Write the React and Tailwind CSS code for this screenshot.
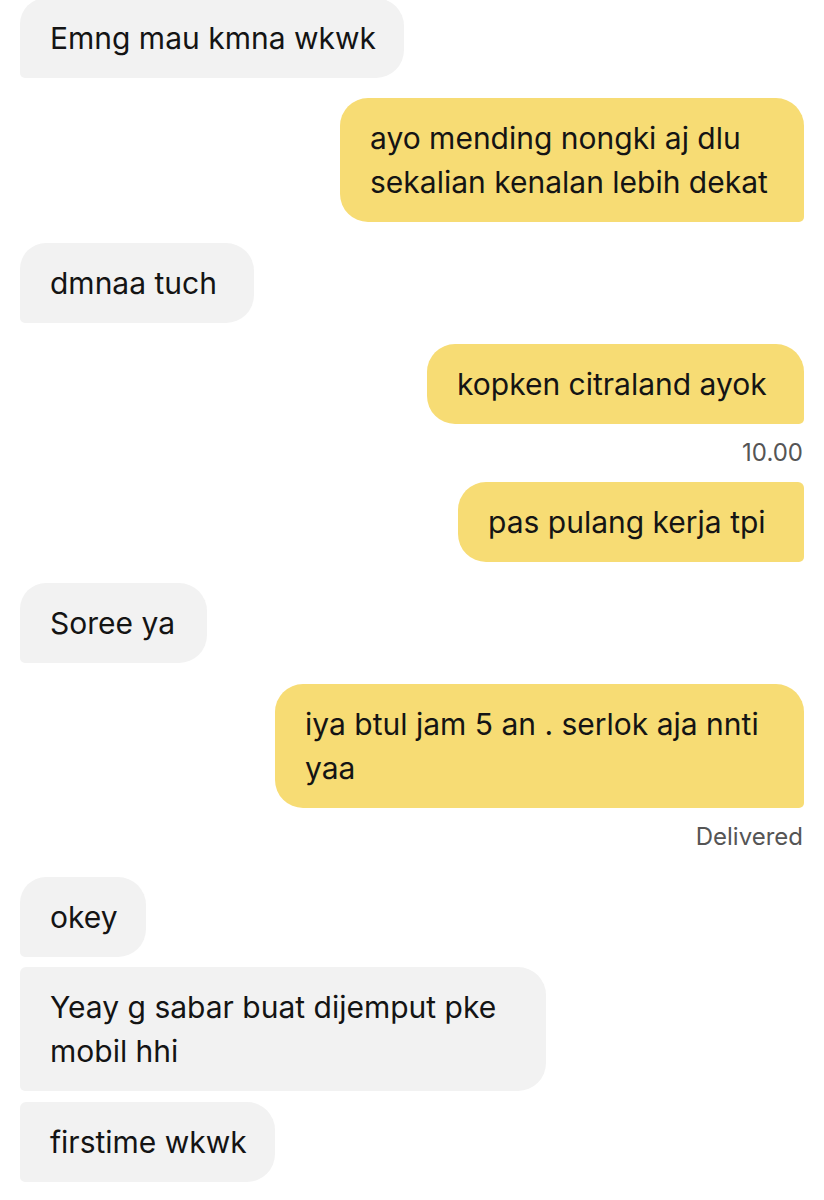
const FONT = { fontFamily: 'Inter, "Noto Sans", sans-serif' }

const messages = [
  { from: 'them', w: 'w-[384px]', tl: 'rounded-tl-[26px]', text: ['Emng mau kmna wkwk'] },
  { from: 'me', w: 'w-[464px]', tr: 'rounded-tr-[28px]', text: ['ayo mending nongki aj dlu', 'sekalian kenalan lebih dekat'], gap: 'mt-[20px]' },
  { from: 'them', w: 'w-[234px]', tl: 'rounded-tl-[26px]', text: ['dmnaa tuch'] },
  { from: 'me', w: 'w-[377px]', tr: 'rounded-tr-[28px]', text: ['kopken citraland ayok'] },
  { meta: '10.00' },
  { from: 'me', w: 'w-[346px]', tr: 'rounded-tr-[6px]', text: ['pas pulang kerja tpi'], gap: 'mt-0' },
  { from: 'them', w: 'w-[187px]', tl: 'rounded-tl-[26px]', text: ['Soree ya'] },
  { from: 'me', w: 'w-[529px]', tr: 'rounded-tr-[28px]', text: ['iya btul jam 5 an . serlok aja nnti', 'yaa'] },
  { meta: 'Delivered' },
  { from: 'them', w: 'w-[126px]', tl: 'rounded-tl-[26px]', text: ['okey'], gap: 'mt-[11px]' },
  { from: 'them', w: 'w-[526px]', tl: 'rounded-tl-[6px]', text: ['Yeay g sabar buat dijemput pke', 'mobil hhi'], gap: 'mt-[10px]' },
  { from: 'them', w: 'w-[255px]', tl: 'rounded-tl-[6px]', text: ['firstime wkwk'], gap: 'mt-[11px]' },
]

function Bubble({ m }) {
  const mine = m.from === 'me'
  const shape = mine
    ? `${m.tr} rounded-tl-[28px] rounded-bl-[28px] rounded-br-[5px] bg-[#f7dc74] self-end`
    : `${m.tl} rounded-tr-[28px] rounded-br-[28px] rounded-bl-[5px] bg-[#f2f2f2] self-start`
  return (
    <div className={`${m.w} ${shape} px-[30px] py-[18px] text-[30px] leading-[44px] text-[#141414] whitespace-nowrap`}>
      {m.text.map((line, i) => <div key={i}>{line}</div>)}
    </div>
  )
}

export default function App() {
  return (
    <div className="w-[824px] h-[1200px] bg-white overflow-hidden" style={FONT}>
      <div className="flex flex-col px-5 -mt-[2px]">
        {messages.map((m, i) => {
          if (m.meta) {
            return (
              <div key={i} className="self-end pr-[1px] h-[58px] flex items-center text-[24px] text-[#555]">
                {m.meta}
              </div>
            )
          }
          const mt = i === 0 ? 'mt-0' : (m.gap ?? 'mt-[21px]')
          return (
            <div key={i} className={`flex flex-col ${mt}`}>
              <Bubble m={m} />
            </div>
          )
        })}
      </div>
    </div>
  )
}
